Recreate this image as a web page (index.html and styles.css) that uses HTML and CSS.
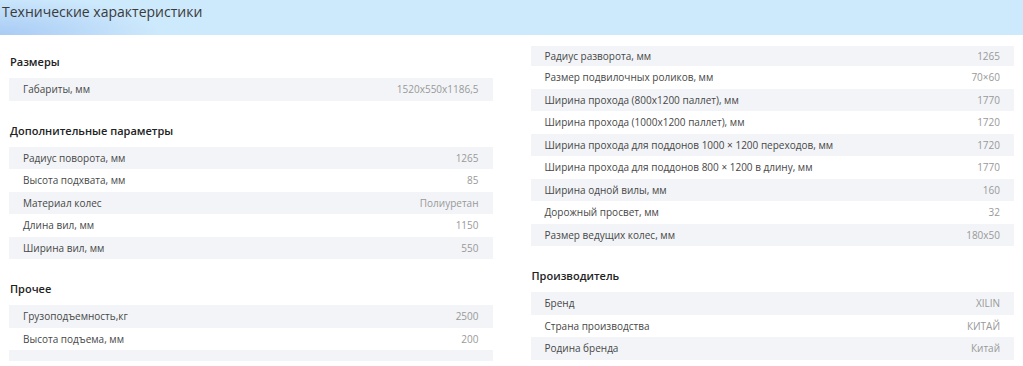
FILE: index.html
```html
<!DOCTYPE html>
<html lang="ru">
<head>
<meta charset="utf-8">
<title>Технические характеристики</title>
<link rel="stylesheet" href="styles.css">
</head>
<body>
<div class="specs">
  <div class="specs-head">
    <h2 class="specs-title">Технические характеристики</h2>
  </div>
  <div class="specs-body">
    <div class="col col--left">
      <section class="group">
        <h3 class="group-title">Размеры</h3>
        <div class="table">
          <div class="row"><span class="label">Габариты, мм</span><span class="value">1520x550x1186,5</span></div>
        </div>
      </section>
      <section class="group">
        <h3 class="group-title">Дополнительные параметры</h3>
        <div class="table">
          <div class="row"><span class="label">Радиус поворота, мм</span><span class="value">1265</span></div>
          <div class="row"><span class="label">Высота подхвата, мм</span><span class="value">85</span></div>
          <div class="row"><span class="label">Материал колес</span><span class="value">Полиуретан</span></div>
          <div class="row"><span class="label">Длина вил, мм</span><span class="value">1150</span></div>
          <div class="row"><span class="label">Ширина вил, мм</span><span class="value">550</span></div>
        </div>
      </section>
      <section class="group group--last">
        <h3 class="group-title">Прочее</h3>
        <div class="table">
          <div class="row"><span class="label">Грузоподъемность,кг</span><span class="value">2500</span></div>
          <div class="row"><span class="label">Высота подъема, мм</span><span class="value">200</span></div>
          <div class="row row--split" aria-hidden="true"></div>
        </div>
      </section>
    </div>
    <div class="col col--right">
      <section class="group">
        <div class="table">
          <div class="row row--first"><span class="label">Радиус разворота, мм</span><span class="value">1265</span></div>
          <div class="row"><span class="label">Размер подвилочных роликов, мм</span><span class="value">70×60</span></div>
          <div class="row"><span class="label">Ширина прохода (800x1200 паллет), мм</span><span class="value">1770</span></div>
          <div class="row"><span class="label">Ширина прохода (1000x1200 паллет), мм</span><span class="value">1720</span></div>
          <div class="row"><span class="label">Ширина прохода для поддонов 1000 × 1200 переходов, мм</span><span class="value">1720</span></div>
          <div class="row"><span class="label">Ширина прохода для поддонов 800 × 1200 в длину, мм</span><span class="value">1770</span></div>
          <div class="row"><span class="label">Ширина одной вилы, мм</span><span class="value">160</span></div>
          <div class="row"><span class="label">Дорожный просвет, мм</span><span class="value">32</span></div>
          <div class="row"><span class="label">Размер ведущих колес, мм</span><span class="value">180x50</span></div>
        </div>
      </section>
      <section class="group group--last">
        <h3 class="group-title">Производитель</h3>
        <div class="table">
          <div class="row"><span class="label">Бренд</span><span class="value">XILIN</span></div>
          <div class="row"><span class="label">Страна производства</span><span class="value">КИТАЙ</span></div>
          <div class="row"><span class="label">Родина бренда</span><span class="value">Китай</span></div>
        </div>
      </section>
    </div>
  </div>
</div>
</body>
</html>
```

FILE: styles.css
```css
* { box-sizing: border-box; }
html, body { margin: 0; padding: 0; background: #fff; }
body {
  font-family: "Open Sans", "Noto Sans", "DejaVu Sans", sans-serif;
  color: #444;
}
.specs-head {
  height: 35px;
  background:
    radial-gradient(ellipse 160px 40px at 0% 100%, #a9cbf5 0%, rgba(205,233,252,0) 100%),
    #cde9fc;
  padding: 0 2px;
  display: flex;
  align-items: center;
}
.specs-title {
  margin: 0 0 11px;
  font-size: 14px;
  font-weight: 400;
  color: #3a3a3a;
  line-height: 20px;
}
.specs-body {
  display: grid;
  grid-template-columns: 1fr 1fr;
  column-gap: 38px;
  padding: 0 9px;
}
.col--left { padding-top: 18px; }
.col--right { padding-top: 11px; }
.group { margin-bottom: 21px; }
.group--last { margin-bottom: 0; }
.group-title {
  margin: 0 0 7px;
  padding-left: 1px;
  font-size: 11px;
  line-height: 18px;
  font-weight: 600;
  color: #222;
}
.table { display: flex; flex-direction: column; }
.row {
  display: flex;
  justify-content: space-between;
  align-items: center;
  padding: 3px 14px;
  font-size: 10px;
  line-height: 16.5px;
}
.row:nth-child(odd) { background: #f2f4f7; }
.row--first { padding-top: 1.5px; padding-bottom: 2px; }
.row--split { height: 11px; padding: 0; }
.label { color: #474747; }
.value { color: #999; }
```
